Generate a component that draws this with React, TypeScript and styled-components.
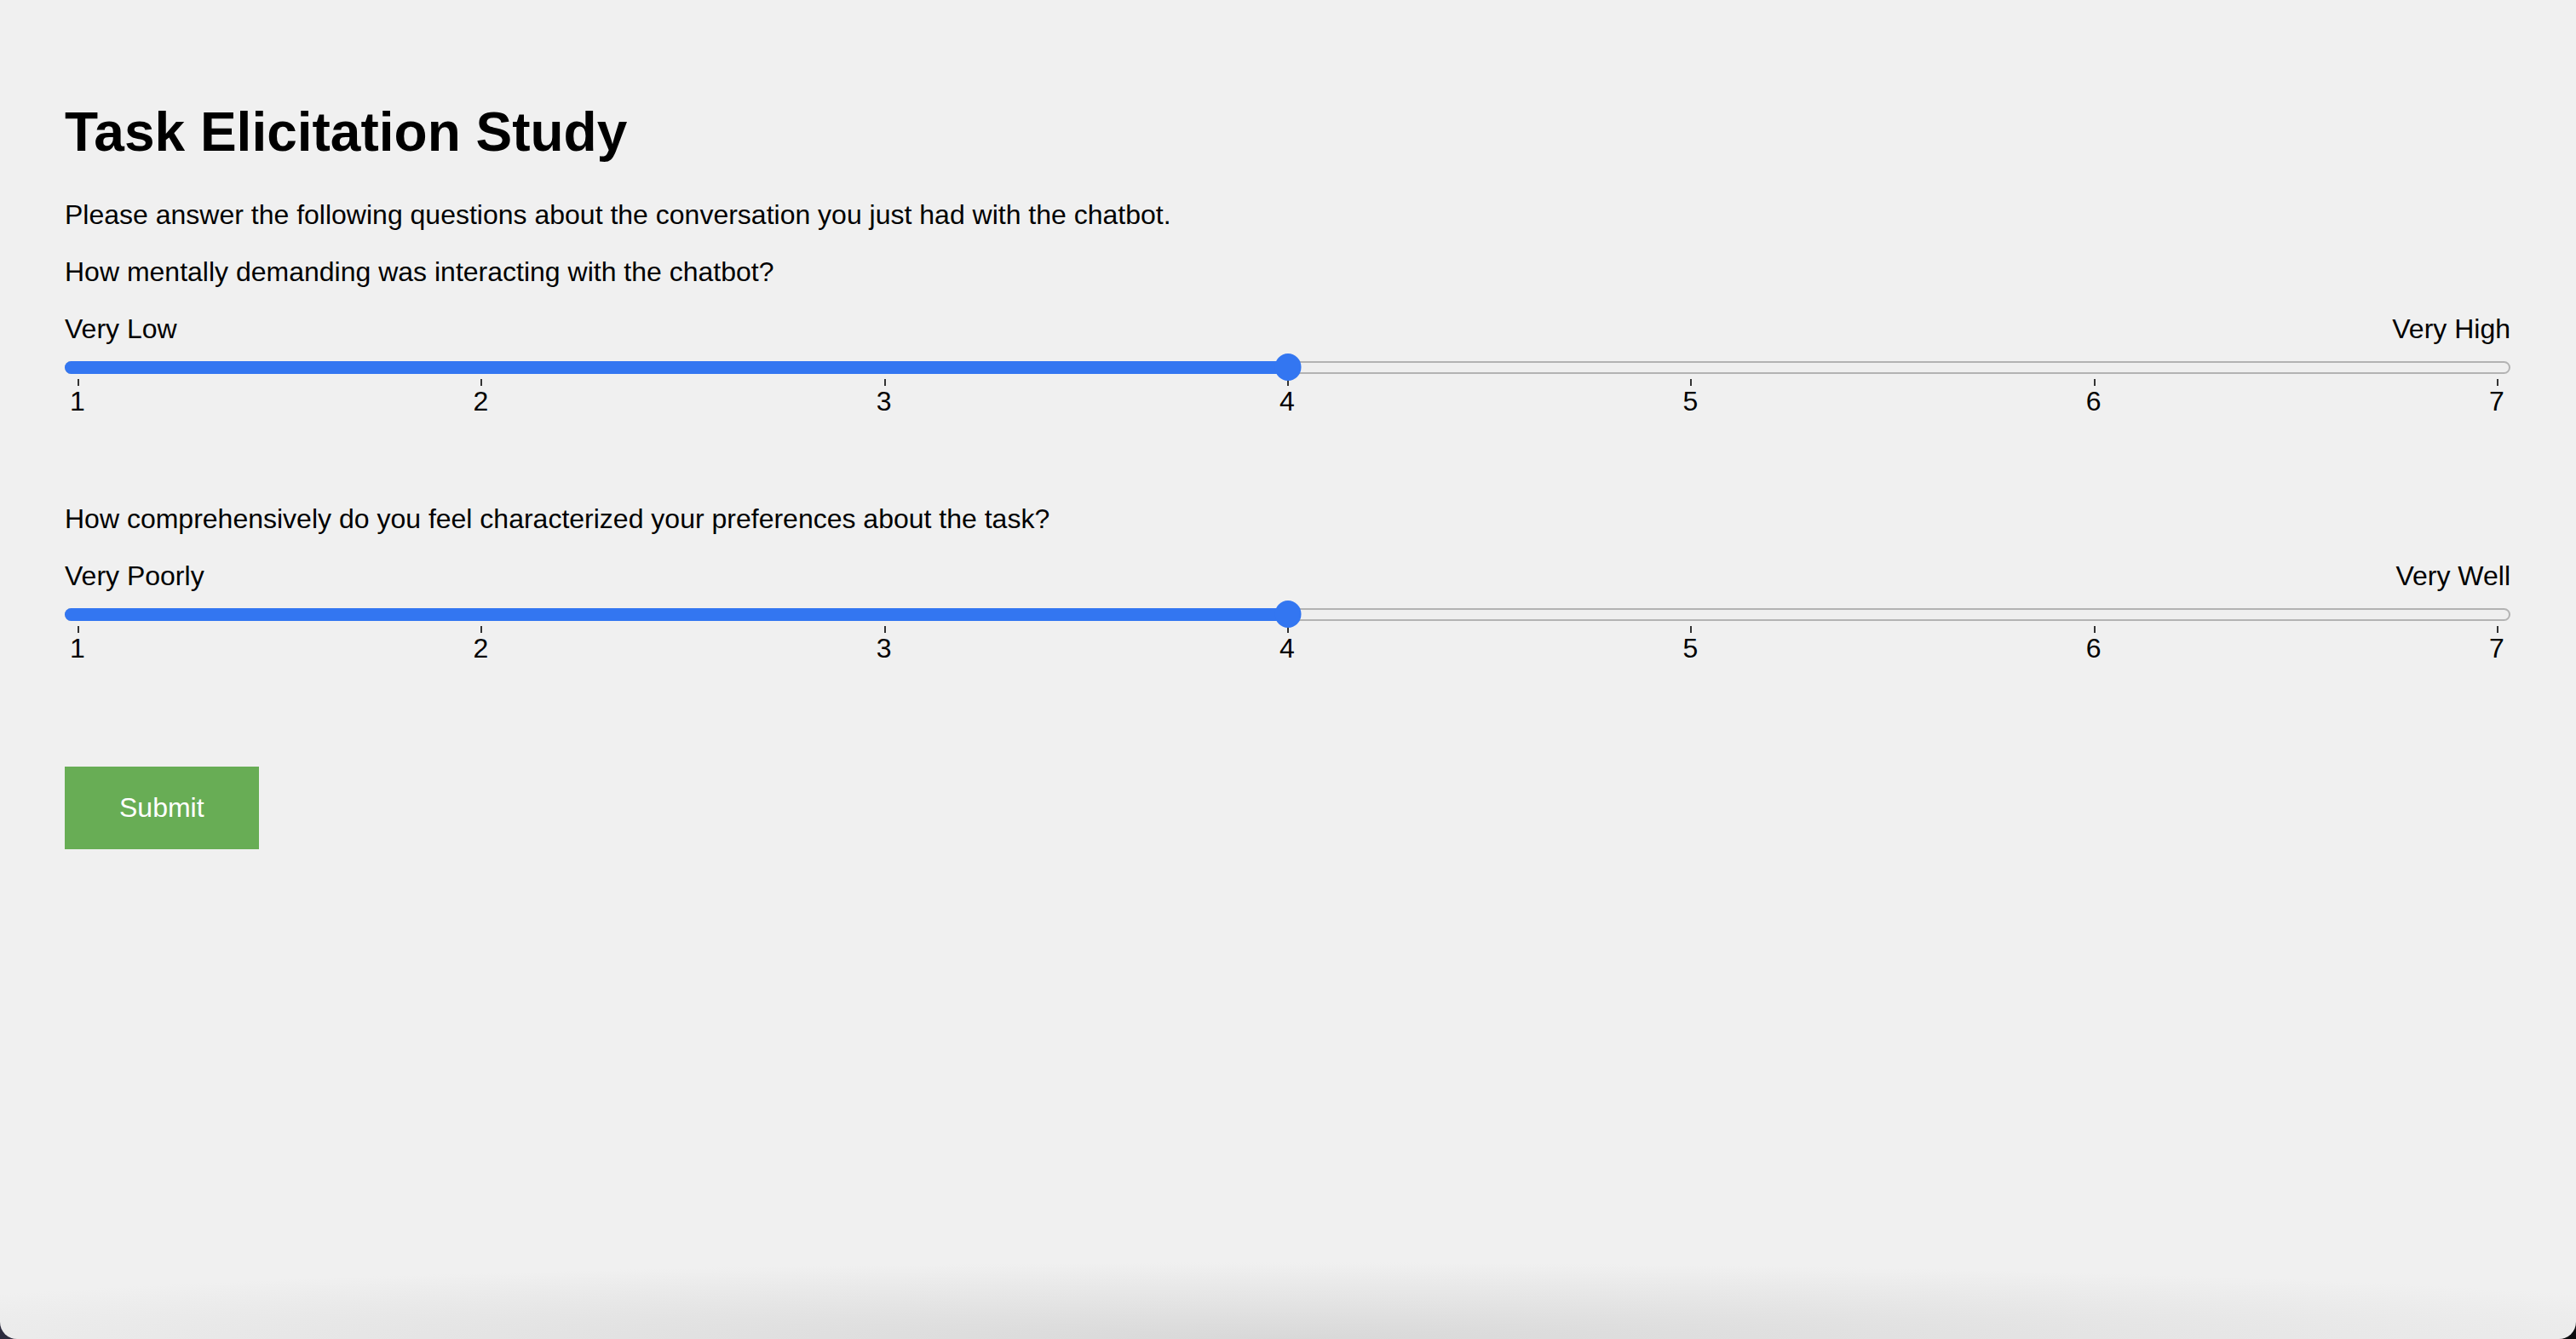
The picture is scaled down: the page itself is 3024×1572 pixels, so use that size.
import React from 'react';
import styled, { createGlobalStyle } from 'styled-components';

// Base page styles: no body margin, dark desktop behind the window corners
const GlobalStyle = createGlobalStyle`
  html, body {
    margin: 0;
    padding: 0;
  }

  body {
    background: linear-gradient(to right, #2c2b3e, #0b0b0e);
    font-family: "Liberation Sans", Arial, Helvetica, sans-serif;
    color: #000;
  }

  * {
    box-sizing: border-box;
  }
`;

// The window surface, rounded at the bottom with a soft shade
const Page = styled.div`
  min-height: 1572px;
  padding: 118px 77px 0 76px;
  background-color: #f0f0f0;
  background-image: radial-gradient(ellipse 62% 90px at 50% 100%, #d8d8d8, rgba(240, 240, 240, 0));
  border-radius: 0 0 20px 20px;
  overflow: hidden;
`;

const Title = styled.h1`
  margin: 0;
  font-size: 64px;
  line-height: 74px;
  font-weight: bold;
`;

const Intro = styled.p`
  margin: 42px 0 0 0;
  font-size: 32px;
  line-height: 36px;
`;

// One rating question with its slider
const QuestionBlock = styled.div<{ $gap: number }>`
  margin-top: ${(props) => props.$gap}px;
`;

const QuestionText = styled.p`
  margin: 0;
  font-size: 32px;
  line-height: 36px;
`;

const ScaleLabels = styled.div`
  display: flex;
  justify-content: space-between;
  margin-top: 31px;
  font-size: 32px;
  line-height: 36px;
`;

const SliderArea = styled.div`
  position: relative;
  height: 32px;
  margin-top: 11px;
  display: flex;
  align-items: center;
`;

const Track = styled.div`
  position: relative;
  width: 100%;
  height: 15px;
  border: 2px solid #b3b3b3;
  border-radius: 8px;
  background-color: #efefef;
`;

// Filled part of the track, up to the thumb centre
const TrackFill = styled.div<{ $fraction: number }>`
  position: absolute;
  left: -2px;
  top: -2px;
  bottom: -2px;
  width: calc(17px + (100% - 30px) * ${(props) => props.$fraction});
  background-color: #3376f1;
  border-radius: 8px 0 0 8px;
`;

const Thumb = styled.div<{ $fraction: number }>`
  position: absolute;
  top: 50%;
  left: calc(15px + (100% - 30px) * ${(props) => props.$fraction});
  width: 31px;
  height: 32px;
  border-radius: 50%;
  background-color: #3376f1;
  transform: translate(-50%, -50%);
`;

const TickRow = styled.div`
  display: flex;
  justify-content: space-between;
  margin-top: -2px;
  padding: 0 14px 0 15px;
`;

const Tick = styled.div`
  width: 2px;
  display: flex;
  flex-direction: column;
  align-items: center;
`;

const TickMark = styled.div`
  width: 2px;
  height: 8px;
  background-color: #333;
`;

const TickLabel = styled.span`
  font-size: 32px;
  line-height: 36px;
  white-space: nowrap;
  margin-right: 2px;
`;

const SubmitButton = styled.button`
  display: block;
  margin-top: 121px;
  padding: 30px 64px;
  border: none;
  border-radius: 0;
  background-color: #68ad55;
  color: #fff;
  font-family: inherit;
  font-size: 32px;
  line-height: 37px;
  cursor: pointer;
`;

interface RatingQuestionProps {
  question: string;
  low: string;
  high: string;
  value: number;
  gap: number;
}

const steps = [1, 2, 3, 4, 5, 6, 7];

const RatingQuestion: React.FC<RatingQuestionProps> = ({ question, low, high, value, gap }) => {
  const fraction = (value - 1) / (steps.length - 1);

  return (
    <QuestionBlock $gap={gap}>
      <QuestionText>{question}</QuestionText>
      <ScaleLabels>
        <span>{low}</span>
        <span>{high}</span>
      </ScaleLabels>
      <SliderArea>
        <Track>
          <TrackFill $fraction={fraction} />
        </Track>
        <Thumb $fraction={fraction} />
      </SliderArea>
      <TickRow>
        {steps.map((step) => (
          <Tick key={step}>
            <TickMark />
            <TickLabel>{step}</TickLabel>
          </Tick>
        ))}
      </TickRow>
    </QuestionBlock>
  );
};

const App: React.FC = () => {
  return (
    <>
      <GlobalStyle />
      <Page>
        <Title>Task Elicitation Study</Title>
        <Intro>Please answer the following questions about the conversation you just had with the chatbot.</Intro>
        <RatingQuestion
          question="How mentally demanding was interacting with the chatbot?"
          low="Very Low"
          high="Very High"
          value={4}
          gap={31}
        />
        <RatingQuestion
          question="How comprehensively do you feel characterized your preferences about the task?"
          low="Very Poorly"
          high="Very Well"
          value={4}
          gap={102}
        />
        <SubmitButton type="button">Submit</SubmitButton>
      </Page>
    </>
  );
};

export default App;
